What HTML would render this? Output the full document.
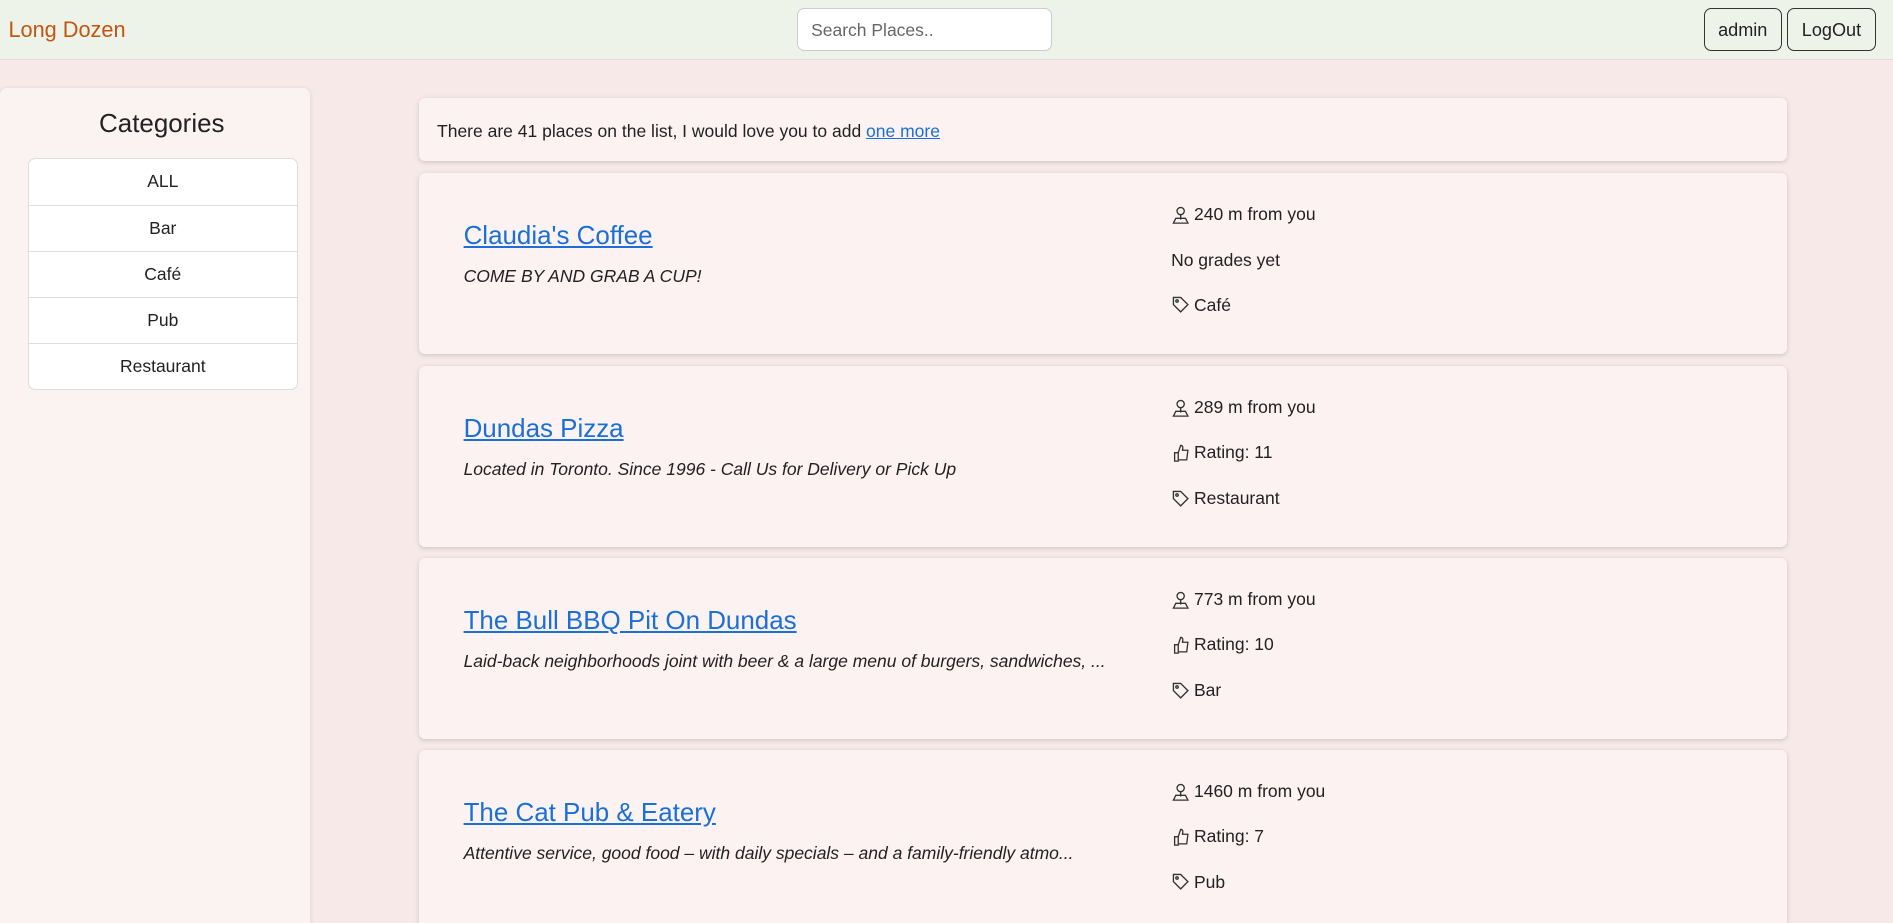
<!DOCTYPE html>
<html><head><meta charset="utf-8"><style>
html,body{margin:0;padding:0;width:1893px;height:923px;overflow:hidden;background:#f6e9e7;}
#w{zoom:1.2073;width:1568px;height:765px;position:relative;font-family:"Liberation Sans",sans-serif;color:#222;}
.hdr{position:absolute;left:0;top:0;width:1568px;height:49px;background:#eef3ea;border-bottom:1px solid #e2dcd8;}
.logo{position:absolute;left:7px;top:14px;font-size:18px;color:#c0560f;}
.search{position:absolute;left:660px;top:7px;width:211px;height:35px;background:#fff;border:1px solid #ccc;border-radius:6px;box-sizing:border-box;font-size:14.5px;color:#666;padding:9px 11px;}
.btn{position:absolute;top:7px;height:35px;border:1px solid #333;border-radius:6px;box-sizing:border-box;font-size:15px;text-align:center;line-height:35px;}
.side{position:absolute;left:0;top:73px;width:257px;height:720px;background:#fbf3f2;border-radius:6px;box-shadow:0 1px 4px rgba(0,0,0,.12);}
.side h2{margin:0;position:absolute;top:18px;width:268px;text-align:center;font-weight:normal;font-size:21.5px;}
.list{position:absolute;left:23px;top:58px;width:222px;background:#fff;border:1px solid #ddd;border-radius:6px;}
.list div{height:38px;line-height:38px;text-align:center;font-size:14.5px;border-top:1px solid #ddd;box-sizing:border-box;}
.list div:first-child{border-top:0;}
.box{position:absolute;left:347px;width:1133px;background:#fbf2f1;border-radius:5px;box-shadow:0 1px 4px rgba(0,0,0,.15);}
.info{top:81px;height:52px;font-size:14.5px;}
.info span{position:absolute;left:15px;top:19px;}
a{color:#1a6fd8;text-decoration:underline;}
.card{height:150px;}
.t{position:absolute;left:37px;top:41px;font-size:21.5px;color:#1a6fd8;text-decoration:underline;}
.d{position:absolute;left:37px;top:77px;font-size:14.5px;font-style:italic;}
.r{position:absolute;left:623px;font-size:14.5px;display:flex;align-items:center;gap:3px;}
.r svg{width:16px;height:16px;}
</style></head><body><div id="w">
<div class="hdr"><div class="logo">Long Dozen</div><div class="search">Search Places..</div>
<div class="btn" style="left:1411px;width:65px">admin</div><div class="btn" style="left:1480px;width:74px">LogOut</div></div>
<div class="side"><h2>Categories</h2><div class="list"><div>ALL</div><div>Bar</div><div>Café</div><div>Pub</div><div>Restaurant</div></div></div>
<div class="box info"><span>There are 41 places on the list, I would love you to add <a>one more</a></span></div>

<div class="box card" style="top:143px"><div class="t">Claudia's Coffee</div><div class="d">COME BY AND GRAB A CUP!</div>
<div class="r" style="top:26px"><svg viewBox="0 0 16 16" fill="none" stroke="#333" stroke-width="1.1"><circle cx="8" cy="5" r="3"/><path d="M8 8v4M2 15l2-4h8l2 4z"/></svg>240 m from you</div>
<div class="r" style="top:64px">No grades yet</div>
<div class="r" style="top:101px"><svg viewBox="0 0 16 16" fill="none" stroke="#333" stroke-width="1.1"><path d="M2 2h6l6 6-6 6-6-6z"/><circle cx="5" cy="5" r="1"/></svg>Café</div></div>

<div class="box card" style="top:303px"><div class="t">Dundas Pizza</div><div class="d">Located in Toronto. Since 1996 - Call Us for Delivery or Pick Up</div>
<div class="r" style="top:26px"><svg viewBox="0 0 16 16" fill="none" stroke="#333" stroke-width="1.1"><circle cx="8" cy="5" r="3"/><path d="M8 8v4M2 15l2-4h8l2 4z"/></svg>289 m from you</div>
<div class="r" style="top:63px"><svg viewBox="0 0 16 16" fill="none" stroke="#333" stroke-width="1.1"><path d="M3 8h3v7H3zM6 8l2-6c2 0 2 2 1.5 4H14l-1 8H6"/></svg>Rating: 11</div>
<div class="r" style="top:101px"><svg viewBox="0 0 16 16" fill="none" stroke="#333" stroke-width="1.1"><path d="M2 2h6l6 6-6 6-6-6z"/><circle cx="5" cy="5" r="1"/></svg>Restaurant</div></div>

<div class="box card" style="top:462px"><div class="t">The Bull BBQ Pit On Dundas</div><div class="d">Laid-back neighborhoods joint with beer &amp; a large menu of burgers, sandwiches, ...</div>
<div class="r" style="top:26px"><svg viewBox="0 0 16 16" fill="none" stroke="#333" stroke-width="1.1"><circle cx="8" cy="5" r="3"/><path d="M8 8v4M2 15l2-4h8l2 4z"/></svg>773 m from you</div>
<div class="r" style="top:63px"><svg viewBox="0 0 16 16" fill="none" stroke="#333" stroke-width="1.1"><path d="M3 8h3v7H3zM6 8l2-6c2 0 2 2 1.5 4H14l-1 8H6"/></svg>Rating: 10</div>
<div class="r" style="top:101px"><svg viewBox="0 0 16 16" fill="none" stroke="#333" stroke-width="1.1"><path d="M2 2h6l6 6-6 6-6-6z"/><circle cx="5" cy="5" r="1"/></svg>Bar</div></div>

<div class="box card" style="top:621px"><div class="t">The Cat Pub &amp; Eatery</div><div class="d">Attentive service, good food – with daily specials – and a family-friendly atmo...</div>
<div class="r" style="top:26px"><svg viewBox="0 0 16 16" fill="none" stroke="#333" stroke-width="1.1"><circle cx="8" cy="5" r="3"/><path d="M8 8v4M2 15l2-4h8l2 4z"/></svg>1460 m from you</div>
<div class="r" style="top:63px"><svg viewBox="0 0 16 16" fill="none" stroke="#333" stroke-width="1.1"><path d="M3 8h3v7H3zM6 8l2-6c2 0 2 2 1.5 4H14l-1 8H6"/></svg>Rating: 7</div>
<div class="r" style="top:101px"><svg viewBox="0 0 16 16" fill="none" stroke="#333" stroke-width="1.1"><path d="M2 2h6l6 6-6 6-6-6z"/><circle cx="5" cy="5" r="1"/></svg>Pub</div></div>
</div></body></html>
